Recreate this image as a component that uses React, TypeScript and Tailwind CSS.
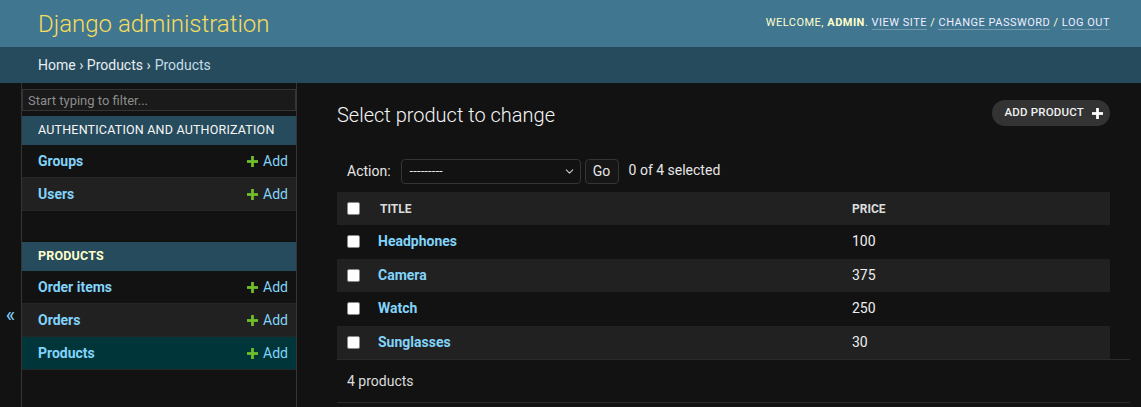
import { ChevronDown } from "lucide-react";

const font = { fontFamily: "Roboto, 'Liberation Sans', sans-serif" };

function PlusIcon({ color, size = 11 }: { color: string; size?: number }) {
  return (
    <svg width={size} height={size} viewBox="0 0 12 12">
      <rect x="4.5" y="0" width="3" height="12" fill={color} />
      <rect x="0" y="4.5" width="12" height="3" fill={color} />
    </svg>
  );
}

function Checkbox() {
  return (
    <span className="block h-[13px] w-[13px] rounded-[2px] border border-[#8a8a8a] bg-white" />
  );
}

const modules = [
  {
    name: "Authentication and Authorization",
    current: false,
    models: [
      { name: "Groups", selected: false },
      { name: "Users", selected: false },
    ],
  },
  {
    name: "Products",
    current: true,
    models: [
      { name: "Order items", selected: false },
      { name: "Orders", selected: false },
      { name: "Products", selected: true },
    ],
  },
];

const products = [
  { title: "Headphones", price: "100" },
  { title: "Camera", price: "375" },
  { title: "Watch", price: "250" },
  { title: "Sunglasses", price: "30" },
];

function Sidebar() {
  return (
    <nav className="flex w-[275px] shrink-0 flex-col border-r border-[#353535] pt-[6px]">
      <input
        placeholder="Start typing to filter..."
        className="h-[22px] w-full border border-[#353535] bg-[#1a1a1a] px-[5px] text-[13px] text-[#ddd] placeholder-[#8c8c8c] outline-none"
      />
      {modules.map((mod) => (
        <div key={mod.name} className="mb-[26px] mt-[5px]">
          <div
            className={`flex h-[29px] items-center whitespace-nowrap bg-[#264b5d] px-4 text-[12.5px] uppercase tracking-[0.2px] ${
              mod.current ? "font-bold text-[#ffc]" : "text-[#f7f7f7]"
            }`}
          >
            {mod.name}
          </div>
          {mod.models.map((m, i) => (
            <div
              key={m.name}
              className={`flex h-[33px] items-center justify-between border-b border-[#262626] pl-4 pr-2 text-[14px] ${
                m.selected ? "bg-[#00363a]" : i % 2 === 1 ? "bg-[#212121]" : "bg-[#121212]"
              }`}
            >
              <span className="font-bold text-[#81d4fa]">{m.name}</span>
              <span className="flex items-center gap-[5px] text-[#81d4fa]">
                <PlusIcon color="#70bf2b" size={11} />
                Add
              </span>
            </div>
          ))}
        </div>
      ))}
    </nav>
  );
}

function ChangeList() {
  return (
    <div className="flex-1 pl-10 pr-[11px] pt-[17px]">
      <div className="flex items-start justify-between pr-[20px]">
        <h1 className="text-[20px] font-light text-[#f5f5f5]">Select product to change</h1>
        <button className="flex h-[26px] items-center gap-[8px] rounded-full bg-[#333] pl-[12px] pr-[7px] text-[11.5px] font-medium uppercase tracking-[0.2px] text-[#f0f0f0]">
          Add product
          <PlusIcon color="#fff" size={11} />
        </button>
      </div>

      <div className="mt-[27px] flex h-[28px] items-center pl-[10px] text-[14px] text-[#e6e6e6]">
        <span>Action:</span>
        <div className="ml-[10px] flex h-[25px] w-[180px] items-center justify-between rounded-[4px] border border-[#353535] bg-[#121212] pl-[8px] pr-[4px]">
          <span className="text-[13px] tracking-[0.1px]">---------</span>
          <ChevronDown size={13} strokeWidth={2} className="text-[#ccc]" />
        </div>
        <div className="ml-[4px] flex h-[25px] w-[34px] items-center justify-center rounded-[4px] border border-[#353535] bg-[#161616]">
          Go
        </div>
        <span className="ml-[10px] pb-[2px]">0 of 4 selected</span>
      </div>

      <div className="mt-[7px] w-[773px]">
        <div className="grid h-[33px] grid-cols-[33px_482px_1fr] items-center bg-[#212121] text-[12px] font-bold uppercase text-[#dcdcdc]">
          <div className="pl-[10px]">
            <Checkbox />
          </div>
          <div className="pl-[10px]">Title</div>
          <div>Price</div>
        </div>
        {products.map((p, i) => (
          <div
            key={p.title}
            className={`grid h-[33.5px] grid-cols-[33px_482px_1fr] items-center text-[14px] ${
              i % 2 === 1 ? "bg-[#212121]" : "bg-[#121212]"
            }`}
          >
            <div className="pl-[10px]">
              <Checkbox />
            </div>
            <div className="pl-[8px] font-bold text-[#81d4fa]">{p.title}</div>
            <div className="text-[#eeeeee]">{p.price}</div>
          </div>
        ))}
      </div>
      <div className="flex h-[44px] items-center border-b border-t border-[#2a2a2a] pl-[10px] text-[14px] text-[#dcdcdc]">
        4 products
      </div>
    </div>
  );
}

export default function App() {
  return (
    <div className="flex h-[407px] flex-col overflow-hidden bg-[#121212]" style={font}>
      <header className="flex h-[47px] shrink-0 items-center justify-between bg-[#417690] pl-[38px] pr-[31px]">
        <div className="text-[24px] font-light text-[#f5dd5d]">Django administration</div>
        <div className="text-[11px] uppercase tracking-[0.5px] text-[#ffc]">
          Welcome, <strong className="font-bold">admin</strong>.{" "}
          <a className="border-b border-white/25 text-[#eef]">View site</a> /{" "}
          <a className="border-b border-white/25 text-[#eef]">Change password</a> /{" "}
          <a className="border-b border-white/25 text-[#eef]">Log out</a>
        </div>
      </header>
      <div className="flex h-[36px] shrink-0 items-center bg-[#264b5d] pl-[38px] text-[14px] text-[#e8eef2]">
        Home › Products › <span className="ml-[4px] text-[#c4dce8]">Products</span>
      </div>
      <main className="flex flex-1">
        <div className="flex w-[22px] shrink-0 justify-center border-r border-[#353535] pt-[222px] text-[20px] leading-none text-[#81d4fa]">
          «
        </div>
        <Sidebar />
        <ChangeList />
      </main>
    </div>
  );
}
